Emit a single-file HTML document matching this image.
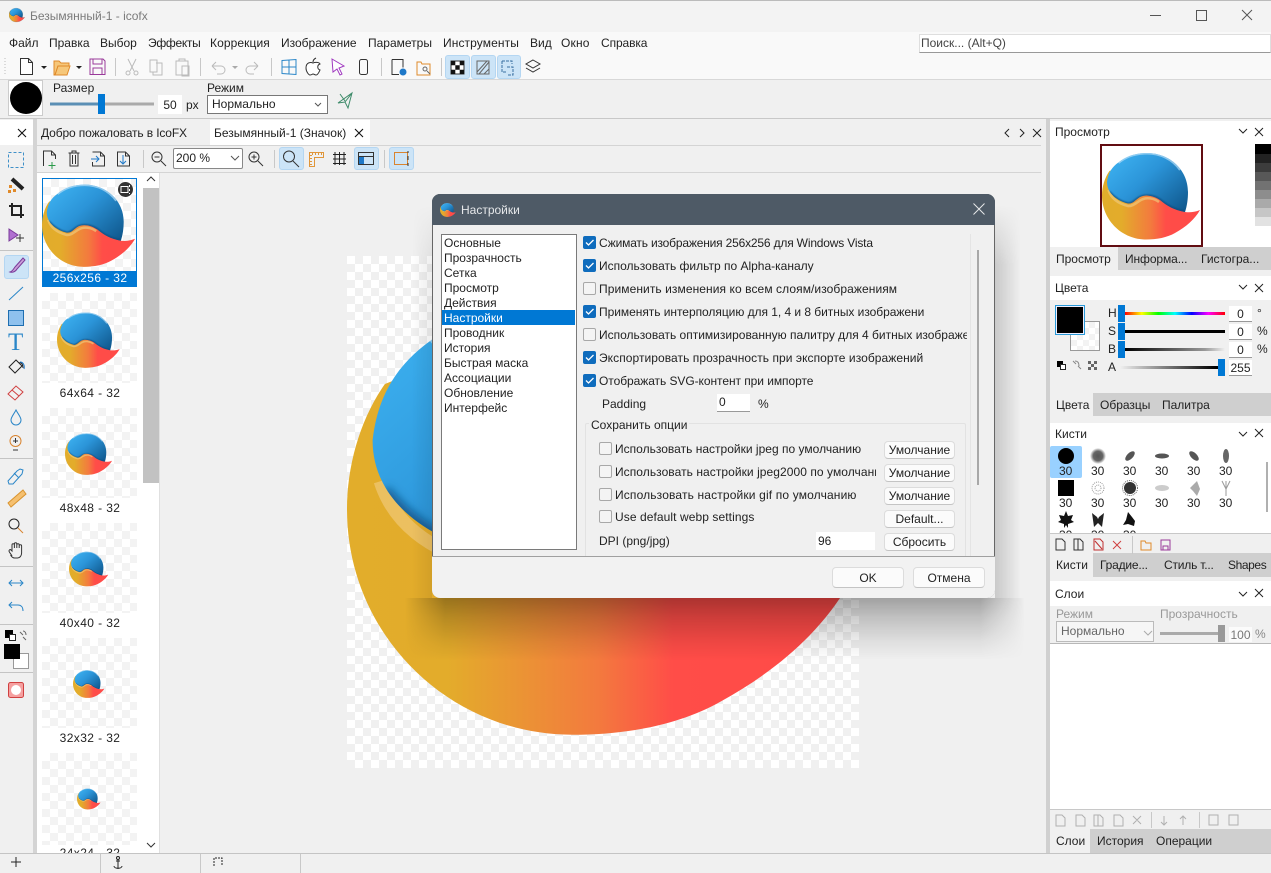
<!DOCTYPE html>
<html lang="ru"><head><meta charset="utf-8"><title>Безымянный-1 - icofx</title>
<style>
html,body{margin:0;padding:0;width:1271px;height:873px;overflow:hidden;background:#f0f0f0}
body{position:relative;font:12px "Liberation Sans","Noto Sans CJK SC",sans-serif;color:#222}
div,span{box-sizing:border-box}
.b{position:absolute}
.t{position:absolute;white-space:nowrap;line-height:14px;height:14px}
.chk{position:absolute;width:13px;height:13px;border-radius:2px;background:#0f6cbd;}
.chk svg{position:absolute;left:0;top:0}
.unc{position:absolute;width:13px;height:13px;border-radius:2px;background:#f4f4f4;border:1px solid #a8a8a8}
.btn{position:absolute;background:#fbfbfb;border:1px solid #dcdcdc;border-bottom-color:#c4c4c4;border-radius:4px;text-align:center;line-height:17px}
.ck{background-image:repeating-conic-gradient(#f3f3f3 0 25%,#fff 0 50%);background-size:16px 16px}
.lab{position:absolute;left:37px;width:106px;text-align:center;line-height:14px;height:14px;letter-spacing:.4px}
.sel{position:absolute;background:#cce4f7;border:1px solid #b4d6f2;border-radius:3px}
.hdr{position:absolute;left:1050px;width:221px;background:#fff}
.tabs{position:absolute;left:1050px;width:221px;background:#cfcfcf}
.act{position:absolute;background:#f0f0f0;left:1050px}
.v{position:absolute;width:23px;height:16px;background:#fff;border-bottom:1px solid #999;line-height:16px;text-align:center}
svg{overflow:visible}
</style></head><body>
<svg width="0" height="0" style="position:absolute"><defs>
<linearGradient id="og" x1="0" x2="1" y1="0" y2="0"><stop offset="0" stop-color="#e2ad2b"/><stop offset=".2" stop-color="#e3ac2b"/><stop offset=".5" stop-color="#f37a3e"/><stop offset=".65" stop-color="#ff4d48"/><stop offset="1" stop-color="#ff4a48"/></linearGradient>
<linearGradient id="bg" x1="0" x2="1" y1="0.1" y2="0.9"><stop offset="0" stop-color="#3eb3f2"/><stop offset=".45" stop-color="#2b94d8"/><stop offset="1" stop-color="#10598f"/></linearGradient>
<radialGradient id="soft"><stop offset="0" stop-color="#555"/><stop offset=".6" stop-color="#666"/><stop offset="1" stop-color="#666" stop-opacity="0"/></radialGradient>
<filter id="bl" x="-20%" y="-20%" width="140%" height="140%"><feGaussianBlur stdDeviation=".9"/></filter>
<clipPath id="bc"><path d="M5,36C6,27 10,21 16.500,16.400C24,10 34,7 45,7C68,7 86,24 86,46C86,53 85,60 83,66C72,64 65,60 58,54C52,50 44,48 38,51C33,54 31,58 26,57.500C16,55 5,48 5,36Z"/></clipPath>
<symbol id="logo" viewBox="0 0 100 100"><path fill="url(#og)" d="M7.4,25C2.500,32 0,41 0,49.500C0,73.800 19.700,93.500 44,93.500C55,93.500 65,91.500 73,87C84,81 93,73 98,64C92,66.500 87,66.500 83,66L60,40L20,20Z"/><path fill="none" stroke="#efc878" stroke-opacity=".7" stroke-width="2.600" d="M6.500,44C9,52 16,57.500 26,60C31,60.500 35,56 39,54C44,51 52,52 57,56"/><path fill="url(#bg)" d="M5,36C6,27 10,21 16.500,16.400C24,10 34,7 45,7C68,7 86,24 86,46C86,53 85,60 83,66C72,64 65,60 58,54C52,50 44,48 38,51C33,54 31,58 26,57.500C16,55 5,48 5,36Z"/><g clip-path="url(#bc)"><path fill="none" stroke="#0c4a7c" stroke-opacity=".75" stroke-width="3" filter="url(#bl)" d="M7,46C12,52 18,56 26,58C31,58 33,54 38,51.500C44,48.500 52,50 58,54C65,60 72,64 83,66"/><path fill="none" stroke="#b4dcf5" stroke-opacity=".7" stroke-width="2" d="M16.500,17C24,10.500 34,7.500 45,7.500C58,7.500 70,13 78,24"/></g></symbol>
</defs></svg>

<!-- chrome backgrounds -->
<div class="b" style="left:0;top:0;width:1271px;height:1px;background:#bbb"></div>
<div class="b" style="left:0;top:1px;width:1271px;height:31px;background:#f3f3f3"></div>
<div class="b" style="left:0;top:32px;width:1271px;height:47px;background:#f9f9f9"></div>
<div class="b" style="left:0;top:79px;width:1271px;height:1px;background:#d8d8d8"></div>
<div class="b" style="left:0;top:118px;width:1271px;height:1px;background:#c8c8c8"></div>
<div class="b" style="left:919px;top:34px;width:352px;height:19px;background:#fff;border:1px solid #dedede;border-bottom-color:#999"></div>
<div class="b" style="left:0;top:120px;width:33px;height:25px;background:#fff"></div>
<div class="b" style="left:33px;top:119px;width:4px;height:734px;background:#d4d4d4"></div>
<div class="b" style="left:37px;top:172px;width:122px;height:681px;background:#fff"></div>
<div class="b" style="left:37px;top:145px;width:1004px;height:1px;background:#d4d4d4"></div>
<div class="b" style="left:37px;top:172px;width:1004px;height:1px;background:#d4d4d4"></div>
<div class="b" style="left:210px;top:120px;width:160px;height:25px;background:#fff"></div>
<div class="b" style="left:143px;top:188px;width:16px;height:295px;background:#c2c2c2"></div>
<div class="b" style="left:159px;top:173px;width:1px;height:680px;background:#e0e0e0"></div>
<div class="b" style="left:1046px;top:119px;width:4px;height:734px;background:#d0d0d0"></div>

<!-- thumbnails -->
<div class="b ck" style="left:42px;top:178px;width:95px;height:94px;border:1px solid #0078d4"></div>
<div class="b" style="left:42px;top:272px;width:95px;height:15px;background:#0078d4"></div>
<div class="b ck" style="left:42px;top:293px;width:95px;height:90px"></div>
<div class="b ck" style="left:42px;top:408px;width:95px;height:90px"></div>
<div class="b ck" style="left:42px;top:523px;width:95px;height:90px"></div>
<div class="b ck" style="left:42px;top:638px;width:95px;height:90px"></div>
<div class="b ck" style="left:42px;top:753px;width:95px;height:92px"></div>
<svg class="b" style="left:42px;top:178px" width="95" height="95"><use href="#logo" width="95" height="95"/></svg>
<svg class="b" style="left:57px;top:308px" width="64" height="64"><use href="#logo" width="64" height="64"/></svg>
<svg class="b" style="left:65px;top:430px" width="48" height="48"><use href="#logo" width="48" height="48"/></svg>
<svg class="b" style="left:69px;top:549px" width="40" height="40"><use href="#logo" width="40" height="40"/></svg>
<svg class="b" style="left:73px;top:668px" width="32" height="32"><use href="#logo" width="32" height="32"/></svg>
<svg class="b" style="left:77px;top:787px" width="24" height="24"><use href="#logo" width="24" height="24"/></svg>
<div class="b" style="left:118px;top:182px;width:15px;height:15px;border-radius:50%;background:#333"></div>
<div class="lab" style="top:271px;color:#fff">256x256 - 32</div>
<div class="lab" style="top:386px">64x64 - 32</div>
<div class="lab" style="top:501px">48x48 - 32</div>
<div class="lab" style="top:616px">40x40 - 32</div>
<div class="lab" style="top:731px">32x32 - 32</div>
<div class="b" style="left:37px;top:845px;width:106px;height:8px;overflow:hidden"><div class="lab" style="left:0;top:1px">24x24 - 32</div></div>

<!-- big canvas -->
<div class="b" style="left:347px;top:256px;width:512px;height:512px;background-image:repeating-conic-gradient(#f0f0f0 0 25%,#fff 0 50%);background-size:16px 16px"></div>
<svg class="b" style="left:347px;top:256px" width="512" height="512"><use href="#logo" width="512" height="512"/></svg>

<!-- right panels -->
<div class="hdr" style="top:121px;height:126px"></div>
<div class="tabs" style="top:247px;height:23px"></div><div class="act" style="top:247px;width:68px;height:23px"></div>
<div class="hdr" style="top:276px;height:24px"></div>
<div class="tabs" style="top:393px;height:23px"></div><div class="act" style="top:393px;width:43px;height:23px"></div>
<div class="b" style="left:1050px;top:416px;width:221px;height:7px;background:#f0f0f0"></div>
<div class="hdr" style="top:423px;height:110px"></div>
<div class="b" style="left:1050px;top:533px;width:221px;height:1px;background:#c8c8c8"></div>
<div class="tabs" style="top:553px;height:24px"></div><div class="act" style="top:553px;width:43px;height:24px"></div>
<div class="hdr" style="top:581px;height:25px"></div>
<div class="b" style="left:1050px;top:643px;width:221px;height:1px;background:#b8b8b8"></div>
<div class="hdr" style="top:644px;height:165px"></div>
<div class="b" style="left:1050px;top:809px;width:221px;height:1px;background:#c8c8c8"></div>
<div class="tabs" style="top:829px;height:24px"></div><div class="act" style="top:829px;width:40px;height:24px"></div>
<div class="b" style="left:0;top:853px;width:1271px;height:1px;background:#c4c4c4"></div>

<!-- preview -->
<div class="b" style="left:1100px;top:144px;width:103px;height:103px;background:#fff;border:2px solid #620d12"></div>
<svg class="b" style="left:1102px;top:146px" width="100" height="100"><use href="#logo" width="100" height="100"/></svg>
<div class="b" style="left:1255px;top:144px;width:16px;height:103px;background:linear-gradient(#000 0 10px,#222 10px 19px,#3c3c3c 19px 28px,#585858 28px 37px,#727272 37px 46px,#8d8d8d 46px 55px,#aaa 55px 64px,#c6c6c6 64px 73px,#e2e2e2 73px 82px,#fff 82px)"></div>

<!-- colour panel -->
<div class="b" style="left:1070px;top:321px;width:30px;height:30px;background-color:#fff;background-image:repeating-conic-gradient(#f3f3f3 0 25%,#fff 0 50%);background-size:12px 12px;border:1px solid #999"></div>
<div class="b" style="left:1055px;top:305px;width:30px;height:30px;background:#000;border:2px solid #eef;outline:1px solid #2a9ad8;outline-offset:-1px"></div>
<div class="b" style="left:1125px;top:312px;width:100px;height:3px;background:linear-gradient(90deg,#f00,#ff0,#0f0,#0ff,#00f,#f0f,#f00)"></div>
<div class="b" style="left:1125px;top:330px;width:100px;height:3px;background:#000"></div>
<div class="b" style="left:1125px;top:348px;width:100px;height:3px;background:linear-gradient(90deg,#000,#999 80%,#f0f0f0)"></div>
<div class="b" style="left:1120px;top:366px;width:100px;height:3px;background:linear-gradient(90deg,#f0f0f0,#000 95%)"></div>
<div class="b" style="left:1118px;top:305px;width:7px;height:17px;background:#0078d4"></div>
<div class="b" style="left:1118px;top:323px;width:7px;height:17px;background:#0078d4"></div>
<div class="b" style="left:1118px;top:341px;width:7px;height:17px;background:#0078d4"></div>
<div class="b" style="left:1218px;top:359px;width:7px;height:17px;background:#0078d4"></div>
<div class="v" style="left:1229px;top:306px">0</div><div class="v" style="left:1229px;top:324px">0</div><div class="v" style="left:1229px;top:342px">0</div><div class="v" style="left:1229px;top:360px">255</div>
<span class="t" style="left:1108px;top:306px">H</span><span class="t" style="left:1108px;top:324px">S</span><span class="t" style="left:1108px;top:342px">B</span><span class="t" style="left:1108px;top:360px">A</span>
<span class="t" style="left:1257px;top:306px">°</span><span class="t" style="left:1257px;top:324px">%</span><span class="t" style="left:1257px;top:342px">%</span>

<!-- brushes -->
<div class="b" style="left:1050px;top:446px;width:32px;height:32px;background:#99d1ff;border-radius:2px"></div>
<div class="b" style="left:1050px;top:447px;width:221px;height:86px;overflow:hidden;line-height:14px;text-align:center">
<svg class="b" style="left:0;top:0" width="221" height="86">
<circle cx="16" cy="9" r="8" fill="#000"/><circle cx="48" cy="9" r="8" fill="url(#soft)"/>
<ellipse cx="80" cy="9" rx="6" ry="3" fill="#555" transform="rotate(-45 80 9)"/><ellipse cx="112" cy="9" rx="7" ry="2.500" fill="#555"/><ellipse cx="144" cy="9" rx="6" ry="3" fill="#555" transform="rotate(45 144 9)"/><ellipse cx="176" cy="9" rx="3" ry="7" fill="#666"/>
<rect x="8" y="33" width="16" height="16" fill="#000"/>
<g fill="none" stroke="#999" stroke-dasharray="1 1"><circle cx="48" cy="41" r="6"/><circle cx="48" cy="41" r="3"/></g>
<circle cx="80" cy="41" r="6" fill="#333"/><g fill="none" stroke="#666" stroke-dasharray="1 1"><circle cx="80" cy="41" r="7.500"/></g>
<ellipse cx="112" cy="41" rx="7" ry="3" fill="#ccc"/><path d="M147,34l3,8 -3,7 -4,-5 -3,-3z" fill="#aaa"/><path d="M176,34v15M176,42l-4,-8M176,42l4,-8" stroke="#999" fill="none"/>
<path d="M26,64l2,5 5,-1 -2,5 3,2 -6,2 0,4 -2,-3 -2,3 0,-4 -6,-2 3,-2 -2,-5 5,1z" fill="#111" transform="translate(-10,0)"/><path d="M42,66l5,4 1,2 1,-2 5,-4 -2,14 -4,-4 -4,4z" fill="#222"/><path d="M78,65l4,5 3,4 -1,5 -6,-2 -5,1 3,-5z" fill="#111"/>
</svg>
<span class="t" style="left:9px;top:17px">30</span><span class="t" style="left:41px;top:17px">30</span><span class="t" style="left:73px;top:17px">30</span><span class="t" style="left:105px;top:17px">30</span><span class="t" style="left:137px;top:17px">30</span><span class="t" style="left:169px;top:17px">30</span>
<span class="t" style="left:9px;top:49px">30</span><span class="t" style="left:41px;top:49px">30</span><span class="t" style="left:73px;top:49px">30</span><span class="t" style="left:105px;top:49px">30</span><span class="t" style="left:137px;top:49px">30</span><span class="t" style="left:169px;top:49px">30</span>
<span class="t" style="left:9px;top:81px">30</span><span class="t" style="left:41px;top:81px">30</span><span class="t" style="left:73px;top:81px">30</span>
</div>
<div class="b" style="left:1266px;top:462px;width:2px;height:50px;background:#b0b0b0"></div>

<!-- layers panel -->
<span class="t" style="left:1056px;top:607px;color:#999">Режим</span><span class="t" style="left:1160px;top:607px;color:#999">Прозрачность</span>
<div class="b" style="left:1056px;top:621px;width:98px;height:21px;background:#f6f6f6;border:1px solid #bbb;color:#666;line-height:19px;padding-left:4px">Нормально</div>
<div class="b" style="left:1160px;top:632px;width:60px;height:3px;background:#aaa"></div>
<div class="b" style="left:1218px;top:625px;width:7px;height:17px;background:#999"></div>
<div class="b" style="left:1229px;top:627px;width:23px;height:15px;background:#fbfbfb;color:#777;line-height:16px;text-align:center">100</div>
<span class="t" style="left:1255px;top:627px;color:#888">%</span>

<!-- text chrome -->
<span class="t" style="left:30px;top:9px;color:#7b7b7b">Безымянный-1 - icofx</span>
<span class="t" style="left:9px;top:36px">Файл</span><span class="t" style="left:49px;top:36px">Правка</span><span class="t" style="left:100px;top:36px">Выбор</span><span class="t" style="left:148px;top:36px;letter-spacing:-.3px">Эффекты</span><span class="t" style="left:210px;top:36px;letter-spacing:.1px">Коррекция</span><span class="t" style="left:281px;top:36px">Изображение</span><span class="t" style="left:368px;top:36px">Параметры</span><span class="t" style="left:443px;top:36px;letter-spacing:.1px">Инструменты</span><span class="t" style="left:530px;top:36px">Вид</span><span class="t" style="left:561px;top:36px;letter-spacing:.2px">Окно</span><span class="t" style="left:601px;top:36px;letter-spacing:-.1px">Справка</span>
<span class="t" style="left:921px;top:36px;color:#444">Поиск... (Alt+Q)</span>
<span class="t" style="left:53px;top:81px">Размер</span><span class="t" style="left:207px;top:81px">Режим</span>
<div class="v" style="left:158px;top:95px;width:24px;height:19px;line-height:20px;border:none">50</div><span class="t" style="left:186px;top:98px">px</span>
<div class="b" style="left:207px;top:95px;width:121px;height:19px;background:#fff;border:1px solid #777;line-height:17px;padding-left:4px">Нормально</div>
<div class="b" style="left:173px;top:148px;width:70px;height:21px;background:#fff;border:1px solid #888;border-radius:2px;line-height:19px;padding-left:2px">200 %</div>
<span class="t" style="left:41px;top:126px;letter-spacing:-.12px">Добро пожаловать в IcoFX</span><span class="t" style="left:214px;top:126px">Безымянный-1 (Значок)</span>
<span class="t" style="left:1055px;top:125px">Просмотр</span><span class="t" style="left:1056px;top:252px">Просмотр</span><span class="t" style="left:1125px;top:252px;letter-spacing:-.1px">Информа...</span><span class="t" style="left:1201px;top:252px">Гистогра...</span>
<span class="t" style="left:1055px;top:281px">Цвета</span><span class="t" style="left:1056px;top:398px">Цвета</span><span class="t" style="left:1100px;top:398px">Образцы</span><span class="t" style="left:1162px;top:398px">Палитра</span>
<span class="t" style="left:1055px;top:427px">Кисти</span><span class="t" style="left:1056px;top:558px">Кисти</span><span class="t" style="left:1100px;top:558px;letter-spacing:-.2px">Градие...</span><span class="t" style="left:1164px;top:558px;letter-spacing:-.2px">Стиль т...</span><span class="t" style="left:1228px;top:558px;letter-spacing:-.4px">Shapes</span>
<span class="t" style="left:1055px;top:587px">Слои</span><span class="t" style="left:1056px;top:834px">Слои</span><span class="t" style="left:1097px;top:834px">История</span><span class="t" style="left:1156px;top:834px">Операции</span>

<!-- selected buttons -->
<div class="sel" style="left:445px;top:55px;width:25px;height:24px"></div><div class="sel" style="left:471px;top:55px;width:25px;height:24px"></div><div class="sel" style="left:497px;top:55px;width:24px;height:24px"></div>
<div class="sel" style="left:279px;top:147px;width:25px;height:23px"></div><div class="sel" style="left:354px;top:147px;width:25px;height:23px"></div><div class="sel" style="left:389px;top:147px;width:25px;height:23px"></div>
<div class="sel" style="left:4px;top:255px;width:25px;height:24px"></div>

<!-- T tool -->
<span class="t" style="left:8px;top:331px;height:24px;line-height:24px;font:25px/24px 'Liberation Serif',serif;color:#2a86c8">T</span>

<!-- icon layer -->
<svg class="b" style="left:0;top:0" width="1271" height="873" fill="none" stroke="#333" stroke-width="1">
<use href="#logo" x="9" y="7" width="16" height="16"/>
<path d="M1150 15.500h11M1196.500 10.500h10v10h-10zM1242 10l10 10M1252 10l-10 10" stroke="#555"/>
<path d="M5 58v18" stroke="#bbb" stroke-dasharray="1 2"/>
<!-- file tools -->
<path d="M20.500 58.500h8l4 4v12h-12zM28.500 58.500v4h4" fill="#fff"/><path d="M41 66h6l-3 3z" fill="#222" stroke="none"/>
<path d="M54 61h5l2 2h8v3H58l-3 9h-1z" fill="#f6c77a" stroke="#e08a2a"/><path d="M55 75l3-9h12l-3 9z" fill="#f6c77a" stroke="#e08a2a"/><path d="M76 66h6l-3 3z" fill="#222" stroke="none"/>
<path d="M90 59h13l2 2v13.500H90zM93 59v5h9v-5M93 74v-6h9v6" stroke="#9a3a9a"/>
<path d="M115.500 58v18M200.500 58v18M271.500 58v18M381.500 58v18M441.500 58v18M143.500 150v18M274.500 150v18M384.500 150v18" stroke="#c8c8c8"/>
<path d="M128 59l6 12M136 59l-6 12" stroke="#bbb"/><circle cx="128" cy="73" r="2" stroke="#bbb"/><circle cx="136" cy="73" r="2" stroke="#bbb"/>
<path d="M150 60h7v12h-7zM156 63h6v12h-9v-3" stroke="#bbb"/><path d="M176 61h12v14h-12zM179 61v-2h6v2M182 66h7v10h-7z" stroke="#bbb"/>
<path d="M212 66l4-4M212 66l4 4M212 66h9a4 4 0 0 1 0 8h-4M258 66l-4-4M258 66l-4 4M258 66h-8a4 4 0 0 0 0 8h4" stroke="#bbb"/><path d="M232 66h6l-3 3z" fill="#aaa" stroke="none"/>
<path d="M282 60.500l14-1v15l-14-1zM289 60v14M282 67h14" stroke="#2a86c8"/>
<path d="M313 63c-2-1-7-1-7 5 0 4 3 7 4 7 2 0 2-1 3-1s2 1 3 1c2 0 3-3 4-5-3-1-3-5 0-6-1-2-5-2-7-1zM313 62c0-2 1-3 3-4" stroke="#333" fill="#fff"/>
<path d="M332 59l12 7-5 2 3 6-2 1-3-6-4 3z" stroke="#a03ac0" fill="#fff"/>
<rect x="359.500" y="59.500" width="8" height="15" rx="2"/>
<path d="M392 59.500h11v8M392 59.500v15h7"/><circle cx="403" cy="72" r="3.500" fill="#1e78c8" stroke="none"/>
<path d="M417 62h4l1 2h8v11h-13z" stroke="#e08a2a"/><circle cx="425" cy="69" r="2" stroke="#666"/><path d="M427 71l3 3" stroke="#666"/>
<path d="M451 61h13v13h-13z" fill="#fff"/><path d="M451 61h4.300v4.300H451zM459.700 61h4.300v4.300h-4.300zM455.300 65.300h4.400v4.400h-4.400zM451 69.700h4.300V74H451zM459.700 69.700h4.300V74h-4.300z" fill="#111" stroke="none"/>
<path d="M477 61h12v13h-12zM477 72l10-11M479 74l10-12M484 74l5-5" stroke="#666"/>
<path d="M502 61h10v3M502 61v11h4M507 67h6v8h-6" stroke="#3a6fa0" stroke-dasharray="3 1"/>
<path d="M533 60l7 4-7 4-7-4zM526 68l7 4 7-4" />
<!-- option bar -->
<rect x="8.500" y="80.500" width="34" height="35" fill="#fff" stroke="#ccc"/><circle cx="26" cy="98" r="16" fill="#000" stroke="none"/>
<path d="M50 104h50" stroke="#5b8fb5" stroke-width="3"/><path d="M105 104h49" stroke="#aaa" stroke-width="3"/><rect x="98" y="94" width="7" height="20" fill="#0078d4" stroke="none"/>
<path d="M315 103l3 3 3-3" stroke="#555"/>
<path d="M338 103l14-10-4 15-3-6zM345 102l7-9M340 94l5 7" stroke="#3e8b6a"/>
<!-- tabs -->
<path d="M18 129l8 8M26 129l-8 8" stroke="#111" stroke-width="1.100"/>
<path d="M355 129l8 8M363 129l-8 8" stroke="#111" stroke-width="1.100"/>
<path d="M1009 129l-4 4 4 4M1020 129l4 4-4 4M1033 129l8 8M1041 129l-8 8" stroke="#222"/>
<path d="M1239 129l4 4 4-4M1255 128l8 8M1263 128l-8 8M1239 285l4 4 4-4M1255 284l8 8M1263 284l-8 8M1239 432l4 4 4-4M1255 429l8 8M1263 429l-8 8M1239 592l4 4 4-4M1255 589l8 8M1263 589l-8 8" stroke="#222"/>
<!-- toolbar 2 -->
<path d="M43.500 166v-15h8l4 4v4M51.500 151v4h4"/><path d="M52 162v7M48.500 165.500h7" stroke="#2a9a4a"/>
<path d="M68.500 153h11M72 153v-2h4v2M70 153v13h8v-13M72.500 155v9M75.500 155v9"/>
<path d="M92.500 152h8l4 4v10h-12v-4M100.500 152v4h4"/><path d="M91 159h8M96 156l3 3-3 3" stroke="#1e78c8"/>
<path d="M117.500 152h8l4 4v10h-12zM125.500 152v4h4"/><path d="M123 155v9M120 161l3 3 3-3" stroke="#1e78c8"/>
<circle cx="157" cy="157" r="5"/><path d="M154.500 157h5M161 161l5 5"/>
<circle cx="254" cy="157" r="5"/><path d="M251.500 157h5M254 154.500v5M258 161l5 5"/>
<path d="M231 156l4 4 4-4" stroke="#555"/>
<circle cx="289" cy="156.500" r="5.500" stroke="#333"/><path d="M293 161l6 6" stroke="#333"/>
<path d="M309.500 152.500h14v5h-9v9h-5zM312.500 153v2M315.500 153v2M318.500 153v2M321.500 153v2M310 155.500h2M310 158.500h2M310 161.500h2M310 164.500h2" stroke="#e0963a"/>
<path d="M335 152v13M339.500 152v13M344 152v13M333 154.500h13M333 159h13M333 163.500h13" stroke="#222"/>
<path d="M358.500 152.500h15v12h-15zM358.500 156.500h15" stroke="#333"/><rect x="359" y="157" width="5" height="7" fill="#1e78c8" stroke="none"/>
<rect x="394.500" y="152.500" width="13" height="12" stroke="#d9842f"/><path d="M408 151v2M408 156v4M408 163v3" stroke="#333"/>
<!-- left tools -->
<path d="M8.500 152.500h15v15h-15z" stroke="#3f90c8" stroke-dasharray="3 2"/>
<path d="M12 179l11 10" stroke="#222" stroke-width="4"/><path d="M9 185h3v3H9zM13 189h3v3h-3zM8 190h3v3H8z" fill="#e08a2a" stroke="none"/>
<path d="M12 203v12h12M9 206h12v12" stroke="#222" stroke-width="2"/>
<path d="M9 229l9 6-9 6z" fill="#b070d0" stroke="#7a3a9a"/><path d="M16 238h8M20 234v8" stroke="#333"/>
<path d="M10 272c3-1 4-4 5-5l8-9 2 2-8 9c-1 2-4 4-7 3z" fill="#c9a0d8" stroke="#7a3a9a"/>
<path d="M9 300l14-13" stroke="#2a86c8"/>
<rect x="8.500" y="310.500" width="15" height="15" fill="#8ec1ee" stroke="#1e6eb0"/>
<path d="M9 367l7-7 6 6-7 7zM19 363c3-1 4 2 4 5" stroke="#222"/><path d="M20 362c3 0 5 3 4 7" stroke="#1e78c8"/>
<path d="M8 394l8-8 7 6-8 8zM12 390l7 6" stroke="#d04040"/>
<path d="M16 410c-2 4-5 7-5 10a5 5 0 0 0 10 0c0-3-3-6-5-10z" stroke="#2a86c8"/>
<circle cx="15.500" cy="441" r="5.500" stroke="#d9842f"/><path d="M13 450h5M15.500 438v5M13 441h5" stroke="#333"/>
<path d="M9 484l4 0 9-10 1-4-3-1-3 2-9 10zM14 473l5 5" stroke="#2a86c8"/>
<path d="M9 506l15-13 3 4-15 13z" fill="#f5c070" stroke="#d9942f" transform="translate(-1,-3)"/>
<circle cx="14" cy="524" r="5" stroke="#222"/><path d="M18 528l5 5" stroke="#d9842f"/>
<path d="M12 556c-1-2-3-4-3-5s1-2 2-1l1 1v-6a1.200 1.200 0 0 1 2.400 0v3-4a1.200 1.200 0 0 1 2.400 0v4-3a1.200 1.200 0 0 1 2.400 0v3-2a1.200 1.200 0 0 1 2.400 0v7c0 3-2 5-4 5h-3c-2 0-3-1-4-3z"/>
<path d="M9 583h14M12 580l-3 3 3 3M20 580l3 3-3 3" stroke="#2a86c8"/>
<path d="M9 605h9c3 0 5 2 5 6M12 602l-3 3 3 3" stroke="#2a86c8"/>
<path d="M0 250.500h33M0 458.500h33M0 566.500h33M0 624.500h33M0 672.500h33" stroke="#c4c4c4"/>
<rect x="5" y="630" width="8" height="8" fill="#000" stroke="none"/><rect x="9.500" y="634.500" width="6" height="6" fill="#fff" stroke="#222"/><path d="M20 632l3 3M26 640l-3-3M23 631c2 0 3 2 3 4" stroke="#666"/>
<rect x="13.500" y="653.500" width="15" height="15" fill="#fff" stroke="#999"/><rect x="4" y="644" width="16" height="15" fill="#000" stroke="none"/>
<rect x="8.500" y="682.500" width="15" height="15" rx="2" fill="#f5a0a0" stroke="#d04040"/><circle cx="16" cy="690" r="5" fill="#fff" stroke="none"/>
<!-- scroll arrows -->
<path d="M147 181l4-4 4 4M147 843l4 4 4-4" stroke="#333"/>
<!-- status -->
<path d="M11 862h10M16 857v10" stroke="#222"/>
<path d="M118 860v9M114 866c0 3 8 3 8 0M116 861h4" stroke="#222"/><circle cx="118" cy="858" r="1.500" stroke="#222"/>
<path d="M214 866v-8h8v8" stroke="#222" stroke-dasharray="2 1"/>
<path d="M100.500 854v19M200.500 854v19M300.500 854v19" stroke="#c8c8c8"/>
<!-- colour panel small -->
<rect x="1057" y="361" width="6" height="6" fill="#000" stroke="none"/><rect x="1060.500" y="364.500" width="5" height="5" fill="#fff" stroke="#222"/>
<path d="M1073 361l3 3M1081 369l-3-3M1075 361c3 0 4 2 4 5" stroke="#888"/>
<path d="M1088 361h3v3h-3zM1094 361h3v3h-3zM1091 364h3v3h-3zM1088 367h3v3h-3zM1094 367h3v3h-3z" fill="#666" stroke="none"/>
<!-- brush toolbar -->
<path d="M1056 539h6l3 3v8h-9zM1074 539h6l3 3v8h-9zM1078 539v11" stroke="#333"/>
<path d="M1094 539h6l3 3v8h-9z" stroke="#c03030"/><path d="M1095 541l7 8" stroke="#c03030"/>
<path d="M1113 541l8 8M1121 541l-8 8" stroke="#d04040"/><path d="M1132.500 536v18" stroke="#c8c8c8"/>
<path d="M1141 541h4l1 2h5v7h-10z" stroke="#e08a2a"/><path d="M1161 540h9v10h-9zM1163 550v-4h5v4" stroke="#9a3a9a"/>
<!-- layers toolbar -->
<g stroke="#b0b0b0"><path d="M1056 815h6l3 3v8h-9zM1076 815h6l3 3v8h-9zM1094 815h6l3 3v8h-9zM1098 815v11M1114 815h6l3 3v8h-9zM1133 816l8 8M1141 816l-8 8M1164 816v9M1161 822l3 3 3-3M1183 825v-9M1180 819l3-3 3 3M1209 815h9v10h-9zM1229 815h9v10h-9z"/></g>
<path d="M1151.500 812v16M1199.500 812v16" stroke="#c8c8c8"/>
<path d="M1144 631l4 4 4-4" stroke="#aaa"/>
</svg>
<svg class="b" style="left:120px;top:184px" width="11" height="11" fill="none" stroke="#fff"><path d="M1 2.500h7v6H1zM9.500 1v2M9.500 5v2M9.500 9v1"/></svg>

<!-- dialog shadow -->
<div class="b" style="left:405px;top:598px;width:620px;height:62px;z-index:9;background:linear-gradient(rgba(0,0,0,.33),rgba(0,0,0,.2) 30%,rgba(0,0,0,.07) 70%,rgba(0,0,0,0));-webkit-mask-image:linear-gradient(90deg,transparent,#000 40px,#000 575px,transparent);mask-image:linear-gradient(90deg,transparent,#000 40px,#000 575px,transparent)"></div>
<div class="b" style="left:995px;top:205px;width:26px;height:393px;z-index:9;background:linear-gradient(90deg,rgba(0,0,0,.16),rgba(0,0,0,0));-webkit-mask-image:linear-gradient(transparent,#000 60px);mask-image:linear-gradient(transparent,#000 60px)"></div>
<div class="b" style="left:412px;top:205px;width:20px;height:393px;z-index:9;background:linear-gradient(270deg,rgba(0,0,0,.07),rgba(0,0,0,0));-webkit-mask-image:linear-gradient(transparent,#000 60px);mask-image:linear-gradient(transparent,#000 60px)"></div>

<!-- dialog -->
<div class="b" style="left:432px;top:194px;width:563px;height:404px;background:#f0f0f0;border-radius:8px;border:1px solid #666;z-index:10;overflow:hidden"></div>
<div class="b" style="left:432px;top:194px;width:563px;height:404px;z-index:11;border-radius:8px;overflow:hidden">
<div class="b" style="left:0;top:0;width:563px;height:31px;background:#4e5a66"></div>
<svg class="b" style="left:8px;top:8px" width="16" height="16"><use href="#logo" width="16" height="16"/></svg>
<span class="t" style="left:29px;top:9px;color:#e6e8ea">Настройки</span>
<svg class="b" style="left:541px;top:9px" width="12" height="12" fill="none" stroke="#e6e8ea"><path d="M.5.500l11 11M11.500.500l-11 11"/></svg>
<div class="b" style="left:9px;top:40px;width:136px;height:316px;background:#fff;border:1px solid #7a7a7a"></div>
<div class="b" style="left:10px;top:116px;width:133px;height:15px;background:#0078d4"></div>
<span class="t" style="left:12px;top:42px">Основные</span><span class="t" style="left:12px;top:57px">Прозрачность</span><span class="t" style="left:12px;top:72px">Сетка</span><span class="t" style="left:12px;top:87px">Просмотр</span><span class="t" style="left:12px;top:102px">Действия</span><span class="t" style="left:12px;top:117px;color:#fff">Настройки</span><span class="t" style="left:12px;top:132px">Проводник</span><span class="t" style="left:12px;top:147px">История</span><span class="t" style="left:12px;top:162px">Быстрая маска</span><span class="t" style="left:12px;top:177px">Ассоциации</span><span class="t" style="left:12px;top:192px">Обновление</span><span class="t" style="left:12px;top:207px">Интерфейс</span>

<div class="chk" style="left:151px;top:42px"><svg width="13" height="13" fill="none" stroke="#fff" stroke-width="1.300"><path d="M3 6.500l2.500 2.500 5-5"/></svg></div>
<div class="chk" style="left:151px;top:65px"><svg width="13" height="13" fill="none" stroke="#fff" stroke-width="1.300"><path d="M3 6.500l2.500 2.500 5-5"/></svg></div>
<div class="unc" style="left:151px;top:88px"></div>
<div class="chk" style="left:151px;top:111px"><svg width="13" height="13" fill="none" stroke="#fff" stroke-width="1.300"><path d="M3 6.500l2.500 2.500 5-5"/></svg></div>
<div class="unc" style="left:151px;top:134px"></div>
<div class="chk" style="left:151px;top:157px"><svg width="13" height="13" fill="none" stroke="#fff" stroke-width="1.300"><path d="M3 6.500l2.500 2.500 5-5"/></svg></div>
<div class="chk" style="left:151px;top:180px"><svg width="13" height="13" fill="none" stroke="#fff" stroke-width="1.300"><path d="M3 6.500l2.500 2.500 5-5"/></svg></div>
<span class="t" style="left:167px;top:42px;letter-spacing:-.18px">Сжимать изображения 256x256 для Windows Vista</span>
<span class="t" style="left:167px;top:65px">Использовать фильтр по Alpha-каналу</span>
<span class="t" style="left:167px;top:88px;letter-spacing:.08px">Применить изменения ко всем слоям/изображениям</span>
<span class="t" style="left:167px;top:111px;letter-spacing:-.04px">Применять интерполяцию для 1, 4 и 8 битных изображени</span>
<span class="t" style="left:167px;top:134px;width:368px;overflow:hidden">Использовать оптимизированную палитру для 4 битных изображений</span>
<span class="t" style="left:167px;top:157px;letter-spacing:.06px">Экспортировать прозрачность при экспорте изображений</span>
<span class="t" style="left:167px;top:180px;letter-spacing:-.06px">Отображать SVG-контент при импорте</span>
<div class="b" style="left:538px;top:40px;width:1px;height:322px;background:#e4e4e4"></div>
<div class="b" style="left:545px;top:56px;width:2px;height:235px;background:#a8a8a8"></div>
<span class="t" style="left:170px;top:203px">Padding</span>
<div class="b" style="left:285px;top:200px;width:33px;height:18px;background:#fff;border-bottom:1px solid #999;padding-left:2px;line-height:16px">0</div>
<span class="t" style="left:326px;top:203px">%</span>
<div class="b" style="left:153px;top:229px;width:381px;height:140px;border:1px solid #e2e2e2;border-radius:2px"></div>
<span class="t" style="left:157px;top:224px;background:#f0f0f0;padding:0 2px">Сохранить опции</span>
<div class="unc" style="left:167px;top:248px"></div><div class="unc" style="left:167px;top:271px"></div><div class="unc" style="left:167px;top:294px"></div><div class="unc" style="left:167px;top:316px"></div>
<span class="t" style="left:183px;top:248px;letter-spacing:.01px">Использовать настройки jpeg по умолчанию</span>
<span class="t" style="left:183px;top:271px;width:261px;overflow:hidden;letter-spacing:.06px">Использовать настройки jpeg2000 по умолчанию</span>
<span class="t" style="left:183px;top:294px;letter-spacing:.15px">Использовать настройки gif по умолчанию</span>
<span class="t" style="left:183px;top:316px;letter-spacing:.08px">Use default webp settings</span>
<div class="btn" style="left:452px;top:247px;width:71px;height:18px">Умолчание</div>
<div class="btn" style="left:452px;top:270px;width:71px;height:18px">Умолчание</div>
<div class="btn" style="left:452px;top:293px;width:71px;height:18px">Умолчание</div>
<div class="btn" style="left:452px;top:316px;width:71px;height:18px">Default...</div>
<div class="btn" style="left:452px;top:339px;width:71px;height:18px">Сбросить</div>
<span class="t" style="left:167px;top:340px">DPI (png/jpg)</span>
<div class="b" style="left:384px;top:338px;width:59px;height:18px;background:#fff;padding-left:2px;line-height:18px">96</div>
<div class="b" style="left:0;top:362px;width:563px;height:42px;background:#f2f2f2;border-top:1px solid #a0a0a0"></div>
<div class="btn" style="left:400px;top:373px;width:72px;height:21px;line-height:20px">OK</div>
<div class="btn" style="left:481px;top:373px;width:72px;height:21px;line-height:20px">Отмена</div>
</div>
</body></html>
